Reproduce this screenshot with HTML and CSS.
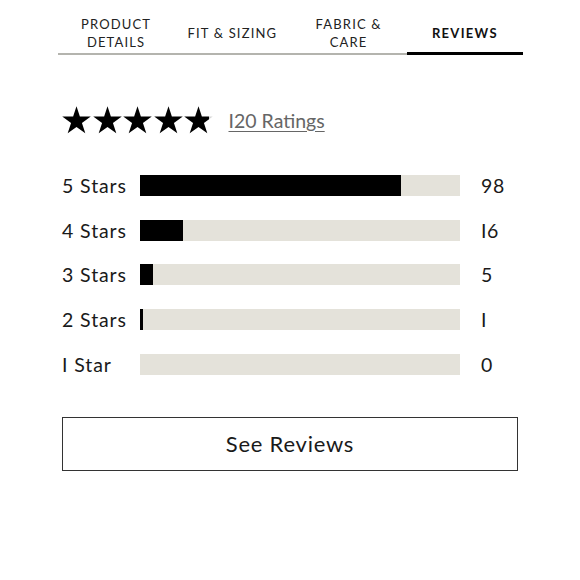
FILE: index.html
```html
<!DOCTYPE html>
<html>
<head>
<meta charset="utf-8">
<link rel="stylesheet" href="styles.css">
</head>
<body>
<div class="page">
  <nav class="tabs">
    <div class="tab">PRODUCT<br>DETAILS</div>
    <div class="tab">FIT &amp; SIZING</div>
    <div class="tab">FABRIC &amp;<br>CARE</div>
    <div class="tab active">REVIEWS</div>
  </nav>
  <section class="content">
    <div class="summary">
      <div class="stars">
        <svg class="star" viewBox="0 0 30 28.5"><polygon points="15,0 18.48,10.71 29.74,10.71 20.63,17.33 24.11,28.04 15,21.42 5.89,28.04 9.37,17.33 0.26,10.71 11.52,10.71"/></svg>
        <svg class="star" viewBox="0 0 30 28.5"><polygon points="15,0 18.48,10.71 29.74,10.71 20.63,17.33 24.11,28.04 15,21.42 5.89,28.04 9.37,17.33 0.26,10.71 11.52,10.71"/></svg>
        <svg class="star" viewBox="0 0 30 28.5"><polygon points="15,0 18.48,10.71 29.74,10.71 20.63,17.33 24.11,28.04 15,21.42 5.89,28.04 9.37,17.33 0.26,10.71 11.52,10.71"/></svg>
        <svg class="star" viewBox="0 0 30 28.5"><polygon points="15,0 18.48,10.71 29.74,10.71 20.63,17.33 24.11,28.04 15,21.42 5.89,28.04 9.37,17.33 0.26,10.71 11.52,10.71"/></svg>
        <svg class="star" viewBox="0 0 30 28.5"><defs><linearGradient id="part" x1="0" x2="1" y1="0" y2="0"><stop offset="0.86" stop-color="#000"/><stop offset="0.86" stop-color="#d6d6d6"/></linearGradient></defs><polygon fill="url(#part)" points="15,0 18.48,10.71 29.74,10.71 20.63,17.33 24.11,28.04 15,21.42 5.89,28.04 9.37,17.33 0.26,10.71 11.52,10.71"/></svg>
      </div>
      <a class="count-link" href="#">I20 Ratings</a>
    </div>
    <div class="rows">
      <div class="row"><span class="label">5 Stars</span><div class="bar"><div class="fill" style="width:81.67%"></div></div><span class="num">98</span></div>
      <div class="row"><span class="label">4 Stars</span><div class="bar"><div class="fill" style="width:13.33%"></div></div><span class="num">I6</span></div>
      <div class="row"><span class="label">3 Stars</span><div class="bar"><div class="fill" style="width:4.17%"></div></div><span class="num">5</span></div>
      <div class="row"><span class="label">2 Stars</span><div class="bar"><div class="fill" style="width:0.83%"></div></div><span class="num">I</span></div>
      <div class="row"><span class="label">I Star</span><div class="bar"><div class="fill" style="width:0%"></div></div><span class="num">0</span></div>
    </div>
    <button class="see">See Reviews</button>
  </section>
</div>
</body>
</html>
```

FILE: styles.css
```css
* { box-sizing: border-box; }
html, body { margin: 0; padding: 0; background: #fff; }
body { font-family: Lato, "Noto Sans", sans-serif; color: #1a1a1a; }
.page { width: 465px; margin-left: 58px; }
.tabs {
  display: grid;
  grid-template-columns: repeat(4, 1fr);
  height: 55px;
  padding-top: 12px;
  border-bottom: 2px solid #b4b4ae;
}
.tab {
  position: relative;
  display: flex;
  align-items: center;
  justify-content: center;
  text-align: center;
  font-size: 13px;
  line-height: 18px;
  letter-spacing: 1.15px;
  color: #222;
}
.tab.active { font-weight: 700; color: #111; letter-spacing: 1.3px; }
.tab.active::after {
  content: "";
  position: absolute;
  left: 0; right: 0; bottom: -2px;
  height: 3px;
  background: #000;
}
.content { margin: 0 5px 0 4px; }
.summary {
  display: flex;
  align-items: center;
  margin-top: 50px;
  height: 30px;
}
.stars { display: flex; }
.star { width: 29px; height: 28px; margin-right: 1.5px; fill: #000; display: block; }
.count-link {
  margin-left: 14px;
  font-size: 19.5px;
  letter-spacing: 0;
  color: #666;
  text-decoration: underline;
  text-underline-offset: 3px;
  text-decoration-thickness: 1px;
}
.rows { margin-top: 28px; }
.row {
  display: flex;
  align-items: center;
  height: 44.75px;
}
.label { width: 78px; font-size: 19.5px; letter-spacing: 0.9px; color: #1a1a1a; }
.bar { width: 320px; height: 21px; background: #e4e2da; }
.fill { height: 100%; background: #000; }
.num { margin-left: 21px; font-size: 19.5px; letter-spacing: 0.6px; color: #1a1a1a; }
.see {
  display: block;
  width: 456px;
  height: 54px;
  margin-top: 30px;
  background: #fff;
  border: 1.5px solid #333;
  font-family: Lato, "Noto Sans", sans-serif;
  font-size: 22px;
  color: #1a1a1a;
  letter-spacing: 0.75px;
}
```
